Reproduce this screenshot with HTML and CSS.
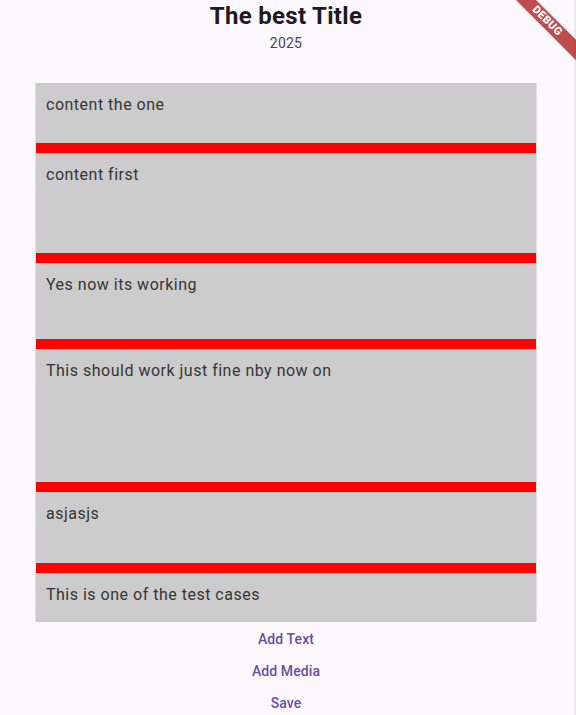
FILE: index.html
```html
<!DOCTYPE html>
<html>
<head>
<meta charset="utf-8">
<link rel="stylesheet" href="styles.css">
</head>
<body>
<div class="page">
  <header class="header">
    <h1 class="title">The best Title</h1>
    <div class="year">2025</div>
  </header>
  <main class="list">
    <div class="item h60">content the one</div>
    <div class="sep"></div>
    <div class="item h100">content first</div>
    <div class="sep"></div>
    <div class="item h76">Yes now its working</div>
    <div class="sep"></div>
    <div class="item h133">This should work just fine nby now on</div>
    <div class="sep"></div>
    <div class="item h71">asjasjs</div>
    <div class="sep"></div>
    <div class="item h49">This is one of the test cases</div>
  </main>
  <div class="actions">
    <button class="btn">Add Text</button>
    <button class="btn">Add Media</button>
    <button class="btn">Save</button>
  </div>
</div>
<div class="edge"></div>
<div class="banner"><span>DEBUG</span></div>
</body>
</html>
```
FILE: styles.css
```css
html, body {
  margin: 0;
  padding: 0;
  background: #fdf7fe;
  font-family: Roboto, "Liberation Sans", sans-serif;
  overflow: hidden;
  width: 576px;
  height: 715px;
}
.page {
  width: 572px;
  display: flex;
  flex-direction: column;
}
.header {
  display: flex;
  flex-direction: column;
  align-items: center;
  padding-top: 2px;
  height: 80px;
  box-sizing: border-box;
}
.title {
  margin: 0;
  font-size: 24px;
  line-height: 29px;
  font-weight: 700;
  letter-spacing: 0.3px;
  color: #1d1b20;
}
.year {
  margin-top: 2px;
  font-size: 14px;
  line-height: 20px;
  letter-spacing: 0.2px;
  color: #49454f;
}
.list {
  margin-top: 3px;
  margin-left: 35px;
  width: 500px;
  border-left: 1px solid #e4dfe5;
  border-right: 1px solid #e4dfe5;
  display: flex;
  flex-direction: column;
}
.item {
  background: #cccccc;
  color: #363636;
  font-size: 16px;
  line-height: 19px;
  padding: 12px 10px 0;
  box-sizing: border-box;
  letter-spacing: 0.5px;
}
.h60 { height: 60px; }
.h100 { height: 100px; }
.h76 { height: 76px; }
.h133 { height: 133px; }
.h71 { height: 71px; }
.h49 { height: 49px; }
.sep {
  height: 10px;
  background: #ff0000;
}
.actions {
  display: flex;
  flex-direction: column;
  align-items: center;
  padding-top: 1px;
}
.btn {
  height: 32px;
  border: none;
  background: transparent;
  color: #6750a4;
  font-family: Roboto, "Liberation Sans", sans-serif;
  font-size: 14px;
  font-weight: 500;
  letter-spacing: 0.1px;
  padding: 0 12px;
}
.edge {
  position: absolute;
  top: 0;
  right: 0;
  width: 2px;
  height: 715px;
  background: #ece8ec;
}
.banner {
  position: absolute;
  top: 0;
  right: 0;
  width: 80px;
  height: 80px;
  overflow: hidden;
}
.banner span {
  position: absolute;
  top: 14px;
  right: -21px;
  width: 100px;
  height: 14px;
  line-height: 14px;
  background: rgba(176, 32, 32, 0.8);
  color: #ffffff;
  font-size: 11px;
  font-weight: 900;
  text-align: center;
  transform: rotate(45deg);
  letter-spacing: 0.4px;
  box-shadow: 0 0 2px rgba(0, 0, 0, 0.25);
}
```
